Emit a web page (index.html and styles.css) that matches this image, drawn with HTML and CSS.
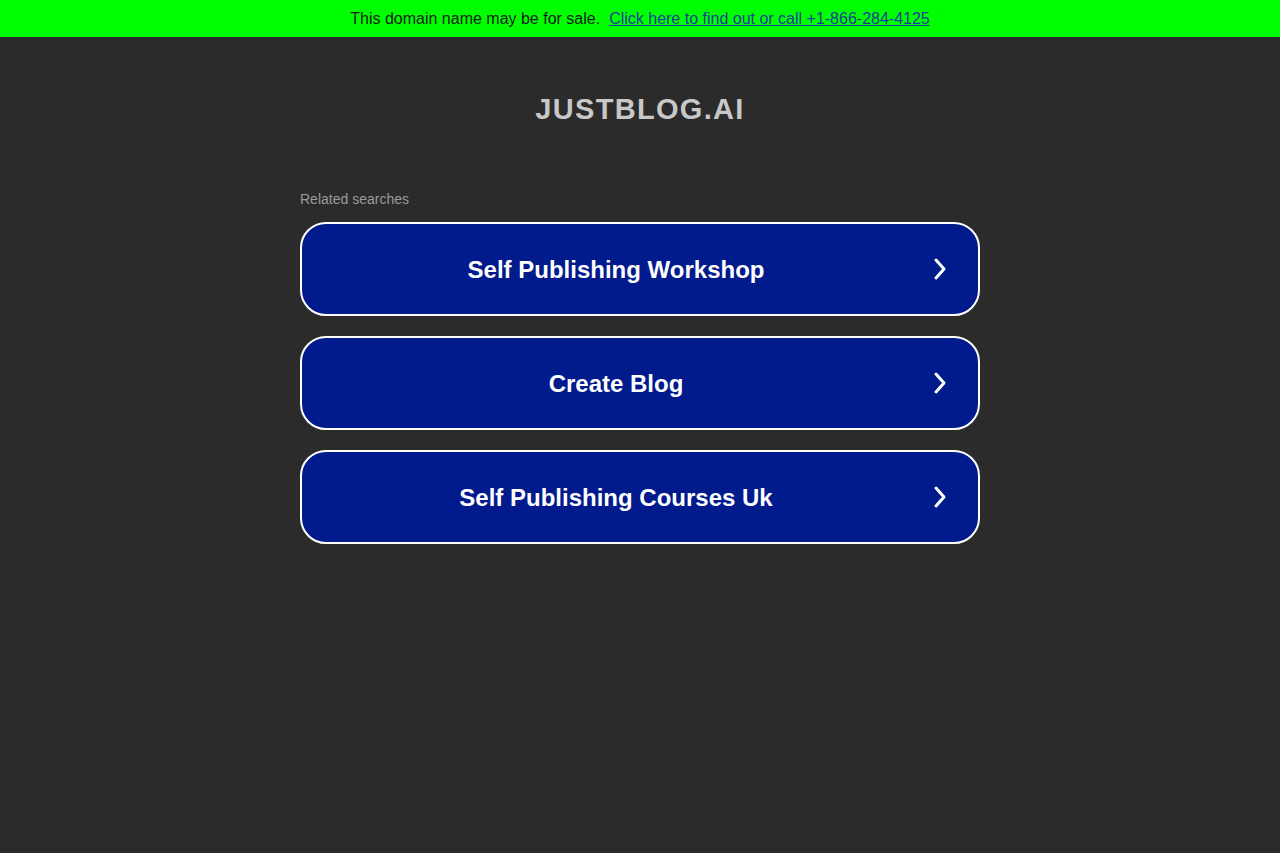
FILE: index.html
```html
<!DOCTYPE html>
<html>
<head>
<meta charset="utf-8">
<link rel="stylesheet" href="styles.css">
</head>
<body>
<div class="topbar">
  <span class="sale">This domain name may be for sale.</span>
  <a class="sale-link" href="#">Click here to find out or call +1-866-284-4125</a>
</div>
<div class="page">
  <h1 class="title">JUSTBLOG.AI</h1>
  <div class="related">
    <div class="related-label">Related searches</div>
    <a class="search-btn" href="#"><span class="search-text">Self Publishing Workshop</span><svg class="chev" width="16" height="24" viewBox="0 0 16 24"><path d="M4 3 L12 12 L4 21" fill="none" stroke="#fff" stroke-width="3" stroke-linecap="round" stroke-linejoin="round"/></svg></a>
    <a class="search-btn" href="#"><span class="search-text">Create Blog</span><svg class="chev" width="16" height="24" viewBox="0 0 16 24"><path d="M4 3 L12 12 L4 21" fill="none" stroke="#fff" stroke-width="3" stroke-linecap="round" stroke-linejoin="round"/></svg></a>
    <a class="search-btn" href="#"><span class="search-text">Self Publishing Courses Uk</span><svg class="chev" width="16" height="24" viewBox="0 0 16 24"><path d="M4 3 L12 12 L4 21" fill="none" stroke="#fff" stroke-width="3" stroke-linecap="round" stroke-linejoin="round"/></svg></a>
  </div>
</div>
</body>
</html>
```
FILE: styles.css
```css
html, body {
  margin: 0;
  padding: 0;
  background: #2b2b2b;
  font-family: "Liberation Sans", Arial, sans-serif;
}
.topbar {
  height: 37px;
  background: #00ff00;
  display: flex;
  align-items: center;
  justify-content: center;
  font-size: 16px;
  color: #1a1a1a;
}
.sale {
  margin-right: 9px;
}
.sale-link {
  color: #1a3d99;
  text-decoration: underline;
}
.page {
  width: 680px;
  margin: 0 auto;
}
.title {
  margin: 54px 0 0;
  text-align: center;
  font-size: 29px;
  font-weight: bold;
  letter-spacing: 1.3px;
  color: #c8c8c8;
  line-height: 36px;
}
.related {
  margin-top: 64px;
}
.related-label {
  font-size: 14px;
  color: #9a9a9a;
  line-height: 16px;
  margin-bottom: 15px;
}
.search-btn {
  box-sizing: border-box;
  height: 94px;
  border: 2px solid #ffffff;
  border-radius: 26px;
  background: #011a8c;
  display: flex;
  align-items: center;
  text-decoration: none;
  margin-bottom: 20px;
  padding: 0 30px 0 30px;
}
.search-text {
  flex: 1;
  text-align: center;
  color: #ffffff;
  font-size: 24px;
  font-weight: bold;
  padding-top: 2px;
}
.chev {
  display: block;
  margin-left: 32px;
}
```
